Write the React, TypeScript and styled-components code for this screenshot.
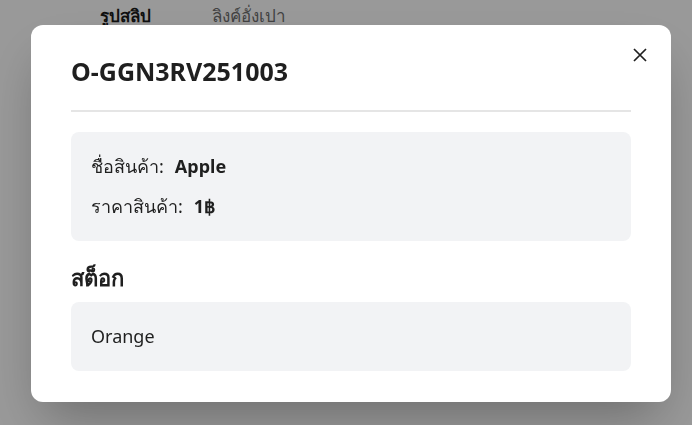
import React from "react";
import styled, { createGlobalStyle } from "styled-components";

const Global = createGlobalStyle`
  html, body { margin: 0; padding: 0; background: #ffffff; }
  body { font-family: "Noto Sans", "Liberation Sans", sans-serif; color: #1f1f1f; }
  * { box-sizing: border-box; }
`;

const Page = styled.div`
  width: 692px;
  height: 425px;
  overflow: hidden;
`;

const Tabs = styled.div`
  display: flex;
  gap: 61px;
  padding: 3px 0 0 100px;
`;

const Tab = styled.div<{ $active?: boolean }>`
  font-size: 17px;
  line-height: 26px;
  font-weight: ${(p) => (p.$active ? 700 : 500)};
  color: ${(p) => (p.$active ? "#1a1a1a" : "#6e6e6e")};
`;

const Overlay = styled.div`
  position: fixed;
  inset: 0;
  background: rgba(0, 0, 0, 0.4);
  display: flex;
  align-items: flex-start;
  padding: 25px 0 0 31px;
`;

const Modal = styled.div`
  position: relative;
  width: 640px;
  background: #ffffff;
  border-radius: 12px;
  padding: 30px 40px 31px;
  box-shadow: 0 25px 50px -12px rgba(0, 0, 0, 0.3);
`;

const Close = styled.button`
  position: absolute;
  top: 23px;
  right: 24px;
  width: 14px;
  height: 14px;
  padding: 0;
  border: none;
  background: none;
  display: flex;
  cursor: pointer;
`;

const Title = styled.h2`
  margin: 0;
  font-size: 25px;
  line-height: 32px;
  font-weight: 700;
  color: #1f1f1f;
`;

const Divider = styled.hr`
  margin: 23px 0 20px;
  border: none;
  border-top: 2px solid #e5e5e5;
`;

const InfoBox = styled.div`
  background: #f2f3f5;
  border-radius: 8px;
  padding: 20px;
  display: flex;
  flex-direction: column;
  gap: 11px;
`;

const Line = styled.div`
  font-size: 18px;
  line-height: 29px;
  color: #1f1f1f;
`;

const Label = styled.span`
  margin-right: 11px;
`;

const Value = styled.strong`
  font-weight: 700;
`;

const SectionTitle = styled.h3`
  margin: 21px 0 9px;
  font-size: 22px;
  line-height: 31px;
  font-weight: 700;
  color: #1f1f1f;
`;

export default function App() {
  return (
    <Page>
      <Global />
      <Tabs>
        <Tab $active>รูปสลิป</Tab>
        <Tab>ลิงค์อั่งเปา</Tab>
      </Tabs>
      <Overlay>
        <Modal>
          <Close aria-label="close">
            <svg width="14" height="14" viewBox="0 0 14 14">
              <path d="M1 1L13 13M13 1L1 13" stroke="#1f1f1f" strokeWidth="1.7" />
            </svg>
          </Close>
          <Title>O-GGN3RV251003</Title>
          <Divider />
          <InfoBox>
            <Line>
              <Label>ชื่อสินค้า:</Label>
              <Value>Apple</Value>
            </Line>
            <Line>
              <Label>ราคาสินค้า:</Label>
              <Value>1฿</Value>
            </Line>
          </InfoBox>
          <SectionTitle>สต็อก</SectionTitle>
          <InfoBox>
            <Line>Orange</Line>
          </InfoBox>
        </Modal>
      </Overlay>
    </Page>
  );
}
